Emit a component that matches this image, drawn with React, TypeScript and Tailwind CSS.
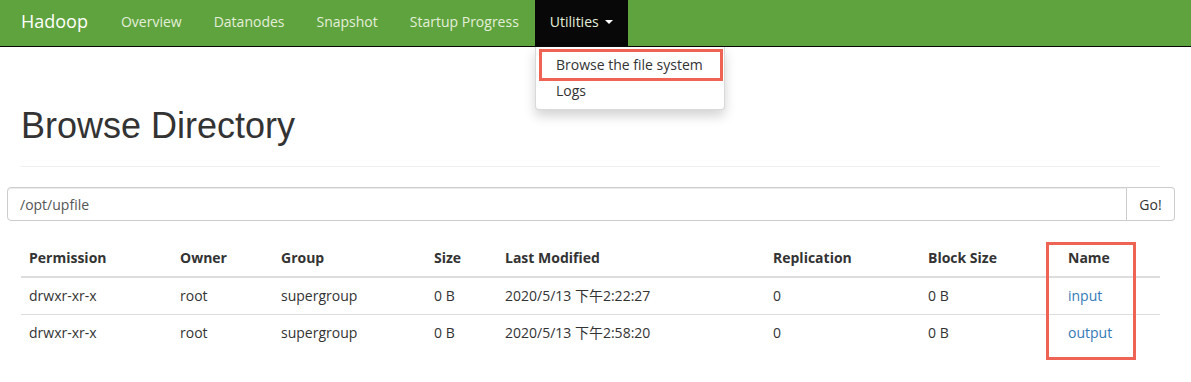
const font = { fontFamily: '"Open Sans", "Noto Sans CJK SC", sans-serif' }

const navLinks = ['Overview', 'Datanodes', 'Snapshot', 'Startup Progress']

const rows = [
  { perm: 'drwxr-xr-x', owner: 'root', group: 'supergroup', size: '0 B', modified: '2020/5/13 下午2:22:27', repl: '0', block: '0 B', name: 'input' },
  { perm: 'drwxr-xr-x', owner: 'root', group: 'supergroup', size: '0 B', modified: '2020/5/13 下午2:58:20', repl: '0', block: '0 B', name: 'output' }
]

const cols = [
  { label: 'Permission', w: 'w-[151px]' },
  { label: 'Owner', w: 'w-[101px]' },
  { label: 'Group', w: 'w-[153px]' },
  { label: 'Size', w: 'w-[71px]' },
  { label: 'Last Modified', w: 'w-[268px]' },
  { label: 'Replication', w: 'w-[155px]' },
  { label: 'Block Size', w: 'w-[140px]' },
  { label: 'Name', w: 'w-[100px]' }
]

export default function App() {
  return (
    <div className="relative w-[1191px] h-[382px] overflow-hidden bg-white text-[14px] text-[#333]" style={font}>
      {/* Navbar */}
      <nav className="relative h-[47px] bg-[#5fa33e] border-b border-[#080808] flex items-stretch">
        <span className="pl-[21px] pr-[17px] pb-[3px] flex items-center text-[18px] text-white">Hadoop</span>
        {navLinks.map((l) => (
          <span key={l} className="px-[16px] pb-[3px] flex items-center text-[#e4efdb]">{l}</span>
        ))}
        <span className="px-[15px] pb-[3px] flex items-center gap-[6px] bg-[#080808] text-[#e4efdb]">
          Utilities
          <span className="w-0 h-0 border-x-[4px] border-x-transparent border-t-[4px] border-t-white mt-[1px]" />
        </span>

        {/* Dropdown */}
        <div className="absolute top-[47px] left-[535px] w-[190px] py-[5px] bg-white border border-black/15 border-t-0 rounded-b-[4px] shadow-[0_6px_12px_rgba(0,0,0,0.175)] z-10">
          <div className="px-[20px] py-[3px] leading-[20px] text-[#333]">Browse the file system</div>
          <div className="px-[20px] py-[3px] leading-[20px] text-[#333]">Logs</div>
          <div className="absolute left-[3px] top-[2px] w-[184px] h-[32px] border-[3px] border-[#ef6355]" />
        </div>
      </nav>

      {/* Page header */}
      <div className="ml-[21px] w-[1139px] mt-[59px] pb-[20px] border-b border-[#eee]">
        <h1 className="text-[36px] leading-[40px] text-[#333]" style={{ fontFamily: '"Liberation Sans", Arial, sans-serif' }}>
          Browse Directory
        </h1>
      </div>

      {/* Path input */}
      <div className="mt-[20px] ml-[7px] w-[1168px] h-[34px] flex">
        <div className="flex-1 flex items-center px-[12px] border border-[#ccc] rounded-l-[4px] shadow-[inset_0_1px_1px_rgba(0,0,0,0.075)] text-[#555]">
          /opt/upfile
        </div>
        <div className="w-[48px] flex items-center justify-center border border-l-0 border-[#ccc] rounded-r-[4px] text-[#333]">
          Go!
        </div>
      </div>

      {/* Table */}
      <div className="relative mt-[19px] ml-[21px] w-[1139px]">
        <table className="w-full table-fixed border-collapse">
          <thead>
            <tr className="border-b-2 border-[#ddd]">
              {cols.map((c) => (
                <th key={c.label} className={`${c.w} p-[8px] leading-[20px] text-left font-bold`}>{c.label}</th>
              ))}
            </tr>
          </thead>
          <tbody>
            {rows.map((r) => (
              <tr key={r.name} className="border-t border-[#ddd]">
                <td className="p-[8px] leading-[20px]">{r.perm}</td>
                <td className="p-[8px] leading-[20px]">{r.owner}</td>
                <td className="p-[8px] leading-[20px]">{r.group}</td>
                <td className="p-[8px] leading-[20px]">{r.size}</td>
                <td className="p-[8px] leading-[20px]">{r.modified}</td>
                <td className="p-[8px] leading-[20px]">{r.repl}</td>
                <td className="p-[8px] leading-[20px]">{r.block}</td>
                <td className="p-[8px] leading-[20px]">
                  <span className="text-[#337ab7]">{r.name}</span>
                </td>
              </tr>
            ))}
          </tbody>
        </table>
        <div className="absolute left-[1025px] top-[2px] w-[90px] h-[118px] border-[3px] border-[#ef6355]" />
      </div>
    </div>
  )
}
